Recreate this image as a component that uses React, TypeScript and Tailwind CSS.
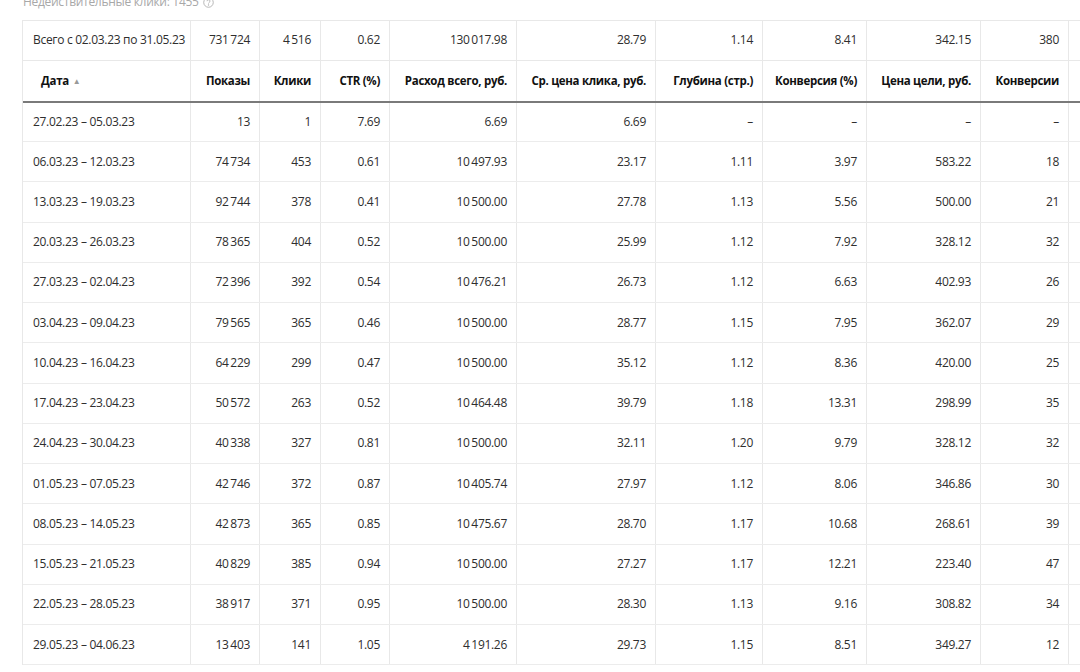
const cols = [168, 69, 61, 69, 127, 139, 107, 104, 114, 88, 120];

const headers = [
  "Показы",
  "Клики",
  "CTR (%)",
  "Расход всего, руб.",
  "Ср. цена клика, руб.",
  "Глубина (стр.)",
  "Конверсия (%)",
  "Цена цели, руб.",
  "Конверсии",
];

const T = "\u2009";

const total = ["Всего с 02.03.23 по 31.05.23", `731${T}724`, `4${T}516`, "0.62", `130${T}017.98`, "28.79", "1.14", "8.41", "342.15", "380"];

const rows = [
  ["27.02.23 – 05.03.23", "13", "1", "7.69", "6.69", "6.69", "–", "–", "–", "–"],
  ["06.03.23 – 12.03.23", `74${T}734`, "453", "0.61", `10${T}497.93`, "23.17", "1.11", "3.97", "583.22", "18"],
  ["13.03.23 – 19.03.23", `92${T}744`, "378", "0.41", `10${T}500.00`, "27.78", "1.13", "5.56", "500.00", "21"],
  ["20.03.23 – 26.03.23", `78${T}365`, "404", "0.52", `10${T}500.00`, "25.99", "1.12", "7.92", "328.12", "32"],
  ["27.03.23 – 02.04.23", `72${T}396`, "392", "0.54", `10${T}476.21`, "26.73", "1.12", "6.63", "402.93", "26"],
  ["03.04.23 – 09.04.23", `79${T}565`, "365", "0.46", `10${T}500.00`, "28.77", "1.15", "7.95", "362.07", "29"],
  ["10.04.23 – 16.04.23", `64${T}229`, "299", "0.47", `10${T}500.00`, "35.12", "1.12", "8.36", "420.00", "25"],
  ["17.04.23 – 23.04.23", `50${T}572`, "263", "0.52", `10${T}464.48`, "39.79", "1.18", "13.31", "298.99", "35"],
  ["24.04.23 – 30.04.23", `40${T}338`, "327", "0.81", `10${T}500.00`, "32.11", "1.20", "9.79", "328.12", "32"],
  ["01.05.23 – 07.05.23", `42${T}746`, "372", "0.87", `10${T}405.74`, "27.97", "1.12", "8.06", "346.86", "30"],
  ["08.05.23 – 14.05.23", `42${T}873`, "365", "0.85", `10${T}475.67`, "28.70", "1.17", "10.68", "268.61", "39"],
  ["15.05.23 – 21.05.23", `40${T}829`, "385", "0.94", `10${T}500.00`, "27.27", "1.17", "12.21", "223.40", "47"],
  ["22.05.23 – 28.05.23", `38${T}917`, "371", "0.95", `10${T}500.00`, "28.30", "1.13", "9.16", "308.82", "34"],
  ["29.05.23 – 04.06.23", `13${T}403`, "141", "1.05", `4${T}191.26`, "29.73", "1.15", "8.51", "349.27", "12"],
];

function Row({ cells, className, pad }: { cells: string[]; className: string; pad: string }) {
  return (
    <div className={`flex ${className}`}>
      {cols.map((w, i) => (
        <div
          key={i}
          style={{ width: w }}
          className={`flex shrink-0 items-center whitespace-nowrap border-r border-[#e8e8e8] ${pad} ${
            i === 0 ? "justify-start pl-[10px]" : "justify-end pr-[9px]"
          }`}
        >
          {cells[i] ?? ""}
        </div>
      ))}
    </div>
  );
}

export default function App() {
  return (
    <div
      className="h-[672px] w-[1080px] overflow-hidden bg-white pl-[22px] text-[12px] tracking-[-0.3px] text-[#2e2e2e]"
      style={{ fontFamily: '"Open Sans", "Noto Sans", sans-serif' }}
    >
      <div className="-mt-[6px] flex h-[16px] items-center gap-1 pl-[1px] text-[#a8a8a8]">
        <span>Недействительные клики: 1455</span>
        <svg width="11" height="11" viewBox="0 0 12 12" fill="none" stroke="#b0b0b0" strokeWidth="1">
          <circle cx="6" cy="6" r="5.2" />
          <path d="M4.4 4.6a1.6 1.6 0 1 1 2.3 1.4c-.5.3-.7.6-.7 1.1" />
          <circle cx="6" cy="8.7" r="0.35" fill="#b0b0b0" />
        </svg>
      </div>
      <div className="mt-[10px] w-[1200px] border-l border-t border-[#e8e8e8]">
        <Row cells={total} className="h-[40px] border-b border-[#e8e8e8]" pad="pb-[2px]" />
        <div className="flex h-[42px] border-b-2 border-[#7a7a7a] text-[11.5px] font-bold text-[#111]">
          {cols.map((w, i) => (
            <div
              key={i}
              style={{ width: w }}
              className={`flex shrink-0 items-center whitespace-nowrap border-r border-[#e8e8e8] pb-[1px] ${
                i === 0 ? "justify-start pl-[18px]" : "justify-end pr-[9px]"
              }`}
            >
              {i === 0 ? (
                <span className="flex items-center gap-1">
                  Дата <span className="text-[8px] text-[#999]">▲</span>
                </span>
              ) : (
                headers[i - 1] ?? ""
              )}
            </div>
          ))}
        </div>
        {rows.map((r, idx) => (
          <Row
            key={idx}
            cells={r}
            pad="pb-0"
            className={`${idx === 0 ? "h-[39px]" : "h-[40.25px]"} border-b border-[#ececec]`}
          />
        ))}
      </div>
    </div>
  );
}
